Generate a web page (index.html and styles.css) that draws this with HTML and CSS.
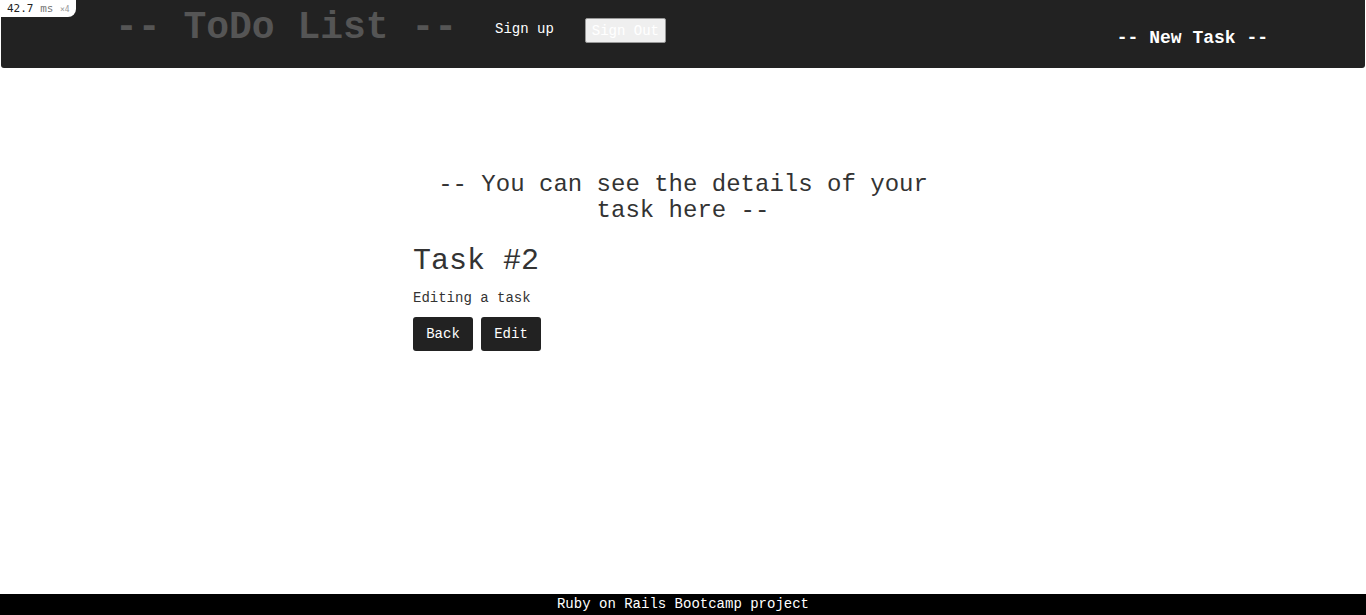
FILE: index.html
```html
<!DOCTYPE html>
<html lang="en">
<head>
    <meta charset="UTF-8">
    <meta name="viewport" content="width=device-width, initial-scale=1.0">
    <title>ToDo List</title>
    <link rel="stylesheet" href="styles.css">
</head>
<body>
    <div class="profiler-badge">42.7 <span class="unit">ms</span> <span class="count">&times;4</span></div>

    <nav class="topbar">
        <h1 class="brand">-- ToDo List --</h1>
        <a class="nav-link" href="#">Sign up</a>
        <button class="sign-out">Sign Out</button>
        <a class="new-task" href="#">-- New Task --</a>
    </nav>

    <main class="task-container">
        <h2 class="task-intro">-- You can see the details of your task here --</h2>
        <h3 class="task-title">Task #2</h3>
        <p class="task-desc">Editing a task</p>
        <div class="task-actions">
            <a class="btn" href="#">Back</a>
            <a class="btn" href="#">Edit</a>
        </div>
    </main>

    <footer class="footer">Ruby on Rails Bootcamp project</footer>
</body>
</html>
```

FILE: styles.css
```css
body {
    margin: 0;
    font-family: 'Liberation Mono', 'Courier New', monospace;
    background-color: #fff;
    color: #333;
    min-height: 100vh;
}
.profiler-badge {
    position: absolute;
    top: 0;
    left: 0;
    height: 17px;
    padding: 0 6px 0 7px;
    background: #fff;
    border-bottom-right-radius: 8px;
    font-family: 'DejaVu Sans Mono', monospace;
    font-size: 11px;
    line-height: 17px;
    color: #222;
    z-index: 10;
}
.profiler-badge .unit {
    color: #777;
}
.profiler-badge .count {
    color: #999;
    font-size: 8px;
}
.topbar {
    display: flex;
    align-items: flex-start;
    height: 68px;
    margin: 0 1px;
    padding-left: 114px;
    padding-right: 97px;
    background-color: #222;
    border-radius: 0 0 3px 3px;
}
.brand {
    margin: 9px 0 0 0;
    font-size: 38px;
    line-height: 38px;
    font-weight: bold;
    color: #555;
}
.nav-link {
    margin: 22px 0 0 38px;
    font-size: 14px;
    line-height: 14px;
    color: #fff;
    text-decoration: none;
}
.sign-out {
    margin: 18px 0 0 31px;
    height: 25px;
    width: 81px;
    padding: 0;
    font-family: inherit;
    font-size: 14px;
    color: #fff;
    background-color: #efefef;
    border: 1px solid #999;
    border-radius: 2px;
}
.new-task {
    margin: 29px 0 0 auto;
    font-size: 18px;
    line-height: 18px;
    font-weight: bold;
    color: #fff;
    text-decoration: none;
}
.task-container {
    width: 540px;
    margin: 0 auto;
    padding-top: 104px;
}
.task-intro {
    margin: 0;
    font-size: 24px;
    line-height: 26px;
    font-weight: normal;
    text-align: center;
    color: #333;
}
.task-title {
    margin: 19px 0 0 0;
    font-size: 30px;
    line-height: 36px;
    font-weight: normal;
    color: #333;
}
.task-desc {
    margin: 10px 0 0 0;
    font-size: 14px;
    line-height: 18px;
    color: #333;
}
.task-actions {
    display: flex;
    gap: 8px;
    margin-top: 10px;
}
.btn {
    display: block;
    width: 60px;
    height: 34px;
    line-height: 34px;
    text-align: center;
    background-color: #222;
    color: #fff;
    font-size: 14px;
    text-decoration: none;
    border-radius: 3px;
}
.footer {
    position: fixed;
    left: 0;
    right: 0;
    bottom: 0;
    height: 21px;
    line-height: 21px;
    background-color: #000;
    color: #fff;
    font-size: 14px;
    text-align: center;
}
```
